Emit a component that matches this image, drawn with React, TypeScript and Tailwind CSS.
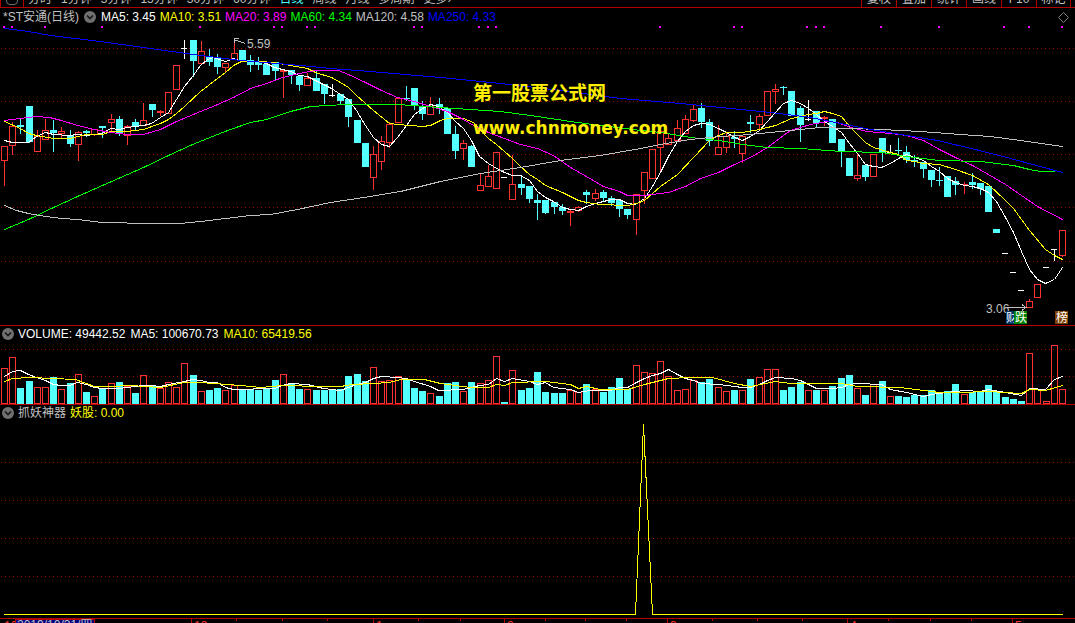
import clsx from 'clsx';

// u = up (hollow red), d = down (solid cyan), f = flat (white)
type Kind = 'u' | 'd' | 'f';
// kind, high, body top, body bottom, low, top of the volume bar, colour of the volume bar
type Candle = [Kind, number, number, number, number, number, Kind];

const candles: Candle[] = [
  ['u', 146, 146, 161, 186, 368, 'u'],
  ['u', 122, 126, 146, 155, 357, 'u'],
  ['d', 119, 125, 127, 134, 388, 'd'],
  ['d', 106, 106, 142, 143, 381, 'd'],
  ['u', 130, 136, 152, 152, 387, 'u'],
  ['u', 119, 130, 140, 140, 387, 'u'],
  ['d', 120, 130, 133, 152, 377, 'd'],
  ['u', 127, 131, 134, 138, 389, 'u'],
  ['d', 130, 135, 144, 147, 383, 'd'],
  ['u', 131, 132, 145, 161, 374, 'u'],
  ['d', 130, 131, 133, 137, 392, 'd'],
  ['u', 129, 129, 135, 136, 396, 'u'],
  ['d', 126, 126, 128, 138, 388, 'd'],
  ['u', 114, 119, 123, 132, 383, 'u'],
  ['d', 116, 119, 133, 136, 382, 'd'],
  ['u', 125, 126, 136, 145, 386, 'u'],
  ['d', 119, 122, 126, 131, 393, 'd'],
  ['u', 103, 120, 126, 126, 375, 'u'],
  ['d', 104, 104, 110, 117, 385, 'd'],
  ['u', 110, 111, 113, 116, 388, 'u'],
  ['u', 92, 92, 114, 114, 382, 'u'],
  ['u', 65, 65, 90, 90, 387, 'u'],
  ['f', 40, 48, 49, 59, 363, 'u'],
  ['d', 40, 40, 61, 77, 375, 'd'],
  ['u', 41, 51, 64, 65, 391, 'u'],
  ['d', 49, 57, 62, 66, 390, 'd'],
  ['d', 54, 58, 67, 74, 388, 'd'],
  ['u', 63, 63, 68, 73, 390, 'u'],
  ['u', 39, 53, 60, 60, 385, 'u'],
  ['d', 50, 50, 60, 60, 389, 'd'],
  ['d', 55, 60, 65, 72, 389, 'd'],
  ['d', 57, 61, 65, 70, 390, 'd'],
  ['d', 64, 64, 75, 75, 388, 'd'],
  ['d', 62, 62, 71, 81, 380, 'd'],
  ['u', 70, 70, 72, 98, 374, 'u'],
  ['d', 70, 70, 75, 84, 384, 'd'],
  ['d', 76, 76, 85, 91, 389, 'd'],
  ['u', 73, 78, 86, 86, 389, 'u'],
  ['d', 71, 78, 91, 91, 390, 'd'],
  ['d', 84, 84, 94, 104, 390, 'd'],
  ['f', 84, 95, 96, 97, 389, 'd'],
  ['d', 94, 94, 101, 105, 389, 'd'],
  ['d', 99, 99, 117, 127, 376, 'd'],
  ['d', 120, 120, 143, 143, 374, 'd'],
  ['d', 143, 143, 167, 167, 381, 'd'],
  ['u', 146, 154, 178, 190, 367, 'u'],
  ['u', 136, 141, 162, 170, 381, 'u'],
  ['u', 122, 124, 143, 148, 380, 'u'],
  ['u', 98, 98, 123, 123, 376, 'u'],
  ['d', 86, 98, 99, 101, 379, 'd'],
  ['d', 88, 88, 106, 110, 388, 'd'],
  ['d', 101, 106, 114, 120, 391, 'd'],
  ['u', 97, 106, 115, 115, 393, 'u'],
  ['d', 98, 104, 107, 114, 396, 'd'],
  ['d', 108, 108, 134, 134, 383, 'd'],
  ['d', 126, 134, 151, 159, 382, 'd'],
  ['u', 140, 143, 149, 160, 391, 'u'],
  ['d', 145, 146, 167, 167, 382, 'd'],
  ['u', 173, 185, 191, 191, 383, 'u'],
  ['u', 165, 176, 187, 187, 380, 'u'],
  ['u', 152, 152, 189, 189, 356, 'u'],
  ['f', 177, 177, 178, 178, 402, 'd'],
  ['u', 155, 184, 200, 200, 370, 'u'],
  ['d', 176, 184, 188, 195, 390, 'd'],
  ['d', 186, 186, 199, 203, 388, 'd'],
  ['d', 194, 200, 203, 220, 372, 'd'],
  ['d', 200, 200, 213, 214, 392, 'd'],
  ['d', 202, 202, 207, 214, 393, 'd'],
  ['d', 204, 207, 211, 215, 393, 'd'],
  ['u', 209, 211, 213, 226, 390, 'u'],
  ['u', 206, 207, 211, 212, 392, 'u'],
  ['d', 190, 192, 195, 204, 384, 'd'],
  ['u', 189, 193, 199, 201, 389, 'u'],
  ['d', 190, 192, 198, 202, 392, 'd'],
  ['d', 196, 198, 203, 206, 387, 'd'],
  ['d', 200, 200, 209, 217, 378, 'd'],
  ['d', 209, 209, 215, 219, 389, 'd'],
  ['u', 194, 194, 220, 235, 365, 'u'],
  ['u', 172, 172, 191, 204, 372, 'u'],
  ['u', 149, 149, 179, 179, 373, 'u'],
  ['u', 127, 131, 148, 172, 361, 'u'],
  ['u', 133, 138, 145, 145, 376, 'u'],
  ['u', 120, 128, 141, 141, 390, 'u'],
  ['u', 115, 119, 134, 134, 389, 'u'],
  ['u', 105, 109, 121, 122, 380, 'u'],
  ['d', 103, 108, 122, 128, 382, 'd'],
  ['d', 119, 122, 141, 146, 379, 'd'],
  ['u', 125, 147, 155, 155, 387, 'u'],
  ['u', 133, 136, 148, 153, 391, 'u'],
  ['d', 131, 137, 139, 148, 390, 'd'],
  ['u', 135, 136, 154, 163, 390, 'u'],
  ['d', 115, 122, 124, 133, 379, 'd'],
  ['u', 114, 116, 125, 130, 377, 'u'],
  ['u', 91, 91, 116, 116, 369, 'u'],
  ['u', 84, 89, 92, 104, 369, 'u'],
  ['d', 86, 87, 88, 95, 390, 'd'],
  ['d', 91, 91, 116, 116, 387, 'd'],
  ['d', 106, 108, 125, 142, 382, 'd'],
  ['f', 100, 119, 120, 121, 390, 'u'],
  ['d', 111, 111, 123, 127, 390, 'd'],
  ['u', 116, 117, 119, 126, 390, 'u'],
  ['d', 119, 119, 143, 143, 386, 'd'],
  ['d', 139, 139, 151, 167, 378, 'd'],
  ['d', 158, 158, 176, 176, 375, 'd'],
  ['u', 154, 175, 179, 181, 388, 'u'],
  ['d', 165, 165, 177, 181, 395, 'd'],
  ['u', 154, 154, 177, 177, 384, 'u'],
  ['d', 138, 138, 153, 162, 381, 'd'],
  ['f', 145, 152, 153, 154, 396, 'u'],
  ['d', 138, 150, 151, 155, 396, 'd'],
  ['d', 146, 152, 160, 163, 397, 'd'],
  ['d', 155, 160, 162, 167, 395, 'd'],
  ['d', 162, 162, 169, 178, 395, 'd'],
  ['d', 170, 170, 180, 187, 390, 'd'],
  ['d', 167, 180, 181, 186, 393, 'd'],
  ['d', 176, 176, 197, 197, 391, 'd'],
  ['d', 177, 181, 185, 195, 384, 'd'],
  ['u', 182, 184, 185, 194, 394, 'u'],
  ['d', 173, 182, 185, 189, 392, 'd'],
  ['d', 183, 183, 189, 195, 392, 'd'],
  ['d', 186, 186, 212, 212, 385, 'd'],
  ['d', 229, 229, 233, 233, 391, 'd'],
  ['f', 253, 253, 254, 254, 397, 'd'],
  ['f', 272, 272, 273, 273, 399, 'd'],
  ['f', 290, 290, 291, 291, 401, 'd'],
  ['u', 299, 301, 308, 308, 353, 'u'],
  ['u', 284, 284, 298, 298, 389, 'u'],
  ['f', 267, 267, 268, 268, 401, 'u'],
  ['f', 249, 249, 250, 261, 345, 'u'],
  ['u', 230, 230, 256, 257, 389, 'u'],
];

const ma5 =
  '4,140 12,142 28,142 36,136 45,132 53,134 69,135 77,134 86,135 102,133 110,128 118,129 127,127 143,125 151,123 160,117 168,112 176,99 184,86 192,76 200,65 207,59 213,57 219,59 225,61 233,58 241,61 258,61 266,63 274,67 290,71 299,75 307,76 315,80 323,84 331,88 340,94 348,99 356,110 365,125 373,137 381,144 389,146 397,137 406,125 414,114 422,108 430,104 438,106 447,112 455,121 463,128 471,140 479,156 488,163 498,169 504,172 512,175 520,175 529,180 537,191 545,197 553,201 562,207 570,209 578,210 586,206 595,203 603,201 611,199 619,199 627,203 635,204 644,198 652,186 660,172 668,156 677,141 685,131 693,125 701,123 709,124 718,128 726,132 734,137 742,140 750,136 759,130 767,121 775,112 783,103 791,100 800,103 808,108 816,114 824,121 832,126 841,132 849,143 857,153 865,164 873,166 881,167 890,163 898,158 906,154 914,157 923,160 931,166 939,171 947,178 955,182 964,185 972,186 980,188 988,192 996,201 1005,217 1013,232 1021,251 1029,269 1037,279 1045,283 1054,279 1062,267';
const ma10 =
  '4,121 20,128 28,133 36,135 53,138 69,138 86,134 102,134 110,131 127,131 143,129 160,123 168,119 176,113 184,106 200,91 217,78 225,72 233,65 241,61 258,61 274,62 290,65 307,68 315,72 331,77 340,82 348,87 356,95 373,110 389,123 397,124 410,125 422,126 430,125 440,120 447,118 463,118 473,122 488,138 496,144 504,151 512,158 520,166 529,174 537,179 545,185 562,192 570,196 578,200 586,202 600,204 627,205 636,203 644,200 652,193 660,186 677,174 693,157 709,140 718,135 726,132 742,132 759,129 775,125 791,118 808,114 816,113 824,111 832,113 841,116 849,126 857,134 865,142 873,147 890,152 898,154 906,160 914,161 923,163 939,164 955,169 972,175 988,184 1005,200 1013,208 1029,230 1045,249 1054,255 1062,259';
const ma20 =
  '4,120 20,118 36,116 49,117 61,120 77,125 94,129 110,132 127,134 143,134 160,129 176,121 200,111 215,105 233,97 250,88 266,83 282,77 299,73 315,70 338,70 348,74 365,82 381,90 397,97 414,101 430,106 447,111 463,119 473,125 488,132 504,138 520,144 537,148 553,155 570,167 586,176 603,186 619,191 627,195 644,195 668,192 685,186 700,178 718,172 734,164 750,157 767,147 783,135 790,130 810,124 827,121 837,122 850,127 867,131 890,133 906,135 923,140 939,149 955,157 972,165 988,174 1005,184 1021,195 1037,206 1062,219';
const ma60 =
  '4,229 28,219 53,207 77,196 102,185 127,174 143,167 168,155 192,144 217,134 230,129 250,122 266,119 290,111 310,106 345,104 397,104 440,107 470,109 500,111 530,115 570,121 600,125 640,130 660,132 690,137 718,140 742,144 767,147 800,148 841,151 881,152 906,156 939,160 980,161 1013,165 1029,169 1040,171 1054,171';
const ma120 =
  '4,205 16,210 28,213 45,216 61,218 77,219 102,222 118,222 135,223 180,223 200,221 225,218 250,215 270,214 297,209 330,202 370,196 400,191 440,181 480,173 520,167 560,160 600,155 640,148 660,144 690,139 720,136 750,134 780,131 800,129 820,127 850,128 880,129 920,131 960,134 990,136 1020,140 1062,146';
const ma250 =
  '4,28 28,31 50,35 100,41 150,48 200,55 240,60 300,65 330,68 370,71 440,77 500,83 560,90 620,98 680,103 720,107 770,112 810,117 840,123 870,129 900,134 937,140 975,149 1010,158 1062,172';

const volMa5 =
  '4,376 12,371 20,370 28,374 36,377 45,380 53,384 61,385 69,385 77,382 86,384 94,387 102,388 118,388 135,386 143,385 151,385 160,386 168,384 184,381 192,379 200,380 209,382 217,382 225,387 233,389 274,388 282,385 290,383 307,384 323,388 340,390 348,387 356,384 365,382 373,378 381,376 397,377 406,378 414,381 430,386 438,390 463,389 479,385 488,384 496,378 504,381 512,378 529,381 537,384 545,382 553,387 570,389 578,392 590,390 610,390 619,387 627,387 636,382 644,378 652,375 660,373 668,369 677,374 685,378 693,380 701,383 718,384 742,387 750,387 759,384 767,380 775,377 791,378 800,380 808,384 816,388 832,388 841,387 849,384 857,383 881,384 890,389 906,392 923,396 931,394 947,392 955,391 964,390 980,391 988,389 1005,392 1021,395 1029,388 1045,389 1054,379 1062,376';
const volMa10 =
  '4,381 12,378 30,377 75,379 94,386 110,386 130,385 160,387 184,382 200,382 240,385 260,387 282,385 320,386 340,386 352,384 373,383 389,382 400,379 424,379 440,383 455,385 470,387 488,387 496,384 504,385 512,382 545,381 570,384 578,388 586,386 600,389 627,389 644,384 668,378 690,377 712,377 734,383 750,386 775,381 790,383 841,383 857,386 900,387 923,390 939,392 960,392 988,391 1021,393 1029,389 1045,390 1062,385';

const eventDots = [
  4, 12, 45, 102, 200, 274, 282, 307, 315, 414, 422, 479, 488, 496, 660, 734, 742, 807, 816, 824, 881, 939, 1004, 1029,
  1062,
];

const axisTicks: { x: number; label?: string }[] = [
  { x: 191, label: '12' },
  { x: 236 },
  { x: 282 },
  { x: 327 },
  { x: 373, label: '1' },
  { x: 418 },
  { x: 460 },
  { x: 504, label: '2' },
  { x: 545 },
  { x: 585 },
  { x: 626 },
  { x: 667, label: '3' },
  { x: 712 },
  { x: 757 },
  { x: 802 },
  { x: 847, label: '4' },
  { x: 888 },
  { x: 930 },
  { x: 971 },
  { x: 1012, label: '5' },
];

const periods = ['分时', '1分钟', '5分钟', '15分钟', '30分钟', '60分钟', '日线', '周线', '月线', '多周期', '更多›'];
const tools = ['复权', '叠加', '统计', '画线', 'F10', '标记'];

const colors: Record<Kind, string> = { u: '#ff3232', d: '#54ffff', f: '#ffffff' };

const centerOf = (i: number) => 4 + Math.round((i * 1058) / 129);

function GridLine({ y }: { y: number }) {
  return <line x1="1" x2="1075" y1={y + 0.5} y2={y + 0.5} stroke="#a00000" strokeDasharray="1 3" />;
}

function Curve({ points, color }: { points: string; color: string }) {
  return <polyline points={points} transform="translate(0.5 0.5)" fill="none" stroke={color} strokeLinecap="square" />;
}

function Bar({ x, top, bottom, kind }: { x: number; top: number; bottom: number; kind: Kind }) {
  const height = bottom - top;
  if (kind === 'u' && height > 2) {
    return <rect x={x - 2.5} y={top + 0.5} width="6" height={height - 1} fill="none" stroke={colors.u} />;
  }
  return <rect x={x - 3} y={top} width={kind === 'f' ? 6 : 7} height={height} fill={colors[kind]} />;
}

function ToggleButton({ label }: { label: string }) {
  return (
    <button type="button" aria-label={label} className="shrink-0">
      <svg viewBox="0 0 12 12" className="block size-3">
        <circle cx="6" cy="6" r="6" fill="#707070" />
        <path d="M3 4.5 L6 7.5 L9 4.5" fill="none" stroke="#181818" strokeWidth="1.6" />
      </svg>
    </button>
  );
}

function Toolbar() {
  return (
    <nav
      aria-label="Chart toolbar"
      className="flex h-2 items-end justify-between overflow-hidden border-b border-[#b00000] text-[#c0c0c0]"
    >
      <div className="flex items-end">
        <div className="flex h-4 w-6 items-end justify-center border-x border-[#b00000] pb-[2px]">
          <span className="h-3 w-3 rounded-sm border border-[#707070]" />
        </div>
        <div className="flex gap-[9px] pl-1">
          {periods.map((period) => (
            <button
              key={period}
              type="button"
              className={clsx('whitespace-nowrap leading-4', period === '日线' && 'text-[#54ffff]')}
            >
              {period}
            </button>
          ))}
        </div>
      </div>
      <div className="flex pr-1">
        {tools.map((tool) => (
          <button
            key={tool}
            type="button"
            className="w-[35px] whitespace-nowrap border-l border-[#b00000] text-center leading-4 last:border-r"
          >
            {tool}
          </button>
        ))}
      </div>
    </nav>
  );
}

function PricePanel() {
  return (
    <section className="relative border-b border-[#b00000]">
      <header className="flex h-[18px] items-center gap-1 whitespace-nowrap pl-[3px] pr-[6px]">
        <div className="flex items-center gap-[5px]">
          <h1 className="text-[#c0c0c0]">*ST安通(日线)</h1>
          <ToggleButton label="主图指标" />
          <span className="text-white">MA5: 3.45</span>
        </div>
        <span className="text-[#ffff00]">MA10: 3.51</span>
        <span className="text-[#ff00ff]">MA20: 3.89</span>
        <span className="text-[#00ff00]">MA60: 4.34</span>
        <span className="text-[#c0c0c0]">MA120: 4.58</span>
        <span className="text-[#0000ff]">MA250: 4.33</span>
        <svg viewBox="0 0 11 11" className="ml-auto size-[11px]">
          <path d="M5.5 0.5 L10.5 5.5 L5.5 10.5 L0.5 5.5 Z" fill="none" stroke="#808080" />
        </svg>
      </header>

      <svg viewBox="0 26 1075 299" className="block w-full" shapeRendering="crispEdges">
        {[48, 101, 154, 207, 261].map((y) => (
          <GridLine key={y} y={y} />
        ))}
        {eventDots.map((x) => (
          <rect key={x} x={x - 1} y="26" width="2" height="2" fill="#ff00ff" />
        ))}
        {candles.map(([kind, high, top, bottom, low], i) => {
          const x = centerOf(i);
          return (
            <g key={i}>
              {high < top && <rect x={x} y={high} width="1" height={top - high} fill={colors[kind]} />}
              {low > bottom && <rect x={x} y={bottom} width="1" height={low - bottom} fill={colors[kind]} />}
              <Bar x={x} top={top} bottom={bottom} kind={kind} />
            </g>
          );
        })}
        <Curve points={ma5} color="#ffffff" />
        <Curve points={ma10} color="#ffff00" />
        <Curve points={ma20} color="#ff00ff" />
        <Curve points={ma60} color="#00ff00" />
        <Curve points={ma120} color="#c0c0c0" />
        <Curve points={ma250} color="#0000ff" />

        {/* highest and lowest price */}
        <path d="M245 43.5 L234 39.5 M239 38.5 H234.5 V43" fill="none" stroke="#c0c0c0" />
        <path d="M1006 307.5 H1027 M1022 304.5 L1026 307.5 L1022 310.5" fill="none" stroke="#c0c0c0" />
        <g fill="#c0c0c0" fontSize="12">
          <text x="247" y="48">
            5.59
          </text>
          <text x="986" y="313">
            3.06
          </text>
        </g>

        {/* event badges */}
        <g fontSize="12" fill="#ffffff">
          <rect x="1006" y="311" width="13" height="13" fill="#003468" />
          <text x="1006" y="322">
            财
          </text>
          <rect x="1014" y="311" width="13" height="13" fill="#008000" />
          <text x="1015" y="322">
            跌
          </text>
          <rect x="1055" y="311" width="13" height="13" fill="#804000" />
          <text x="1056" y="322">
            榜
          </text>
        </g>
      </svg>

      <div className="pointer-events-none absolute left-[44%] top-[69px] whitespace-nowrap font-bold text-[#ffee00]">
        <p className="text-[19px] leading-[34px]">第一股票公式网</p>
        <p className="font-['DejaVu_Sans',sans-serif] text-[17px] leading-[34px]">www.chnmoney.com</p>
      </div>
    </section>
  );
}

function VolumePanel() {
  return (
    <section className="border-b border-[#b00000]">
      <header className="flex h-[17px] items-center gap-[5px] whitespace-nowrap pb-[2px] pl-[2px]">
        <div className="flex items-center gap-1">
          <ToggleButton label="成交量指标" />
          <span className="text-white">VOLUME: 49442.52</span>
        </div>
        <span className="text-white">MA5: 100670.73</span>
        <span className="text-[#ffff00]">MA10: 65419.56</span>
      </header>
      <svg viewBox="0 343 1075 61" className="block w-full" shapeRendering="crispEdges">
        <GridLine y={349} />
        <GridLine y={376} />
        {candles.map((candle, i) => (
          <Bar key={i} x={centerOf(i)} top={candle[5]} bottom={404} kind={candle[6]} />
        ))}
        <Curve points={volMa5} color="#ffffff" />
        <Curve points={volMa10} color="#ffff00" />
      </svg>
    </section>
  );
}

function SignalPanel() {
  return (
    <section className="border-b border-[#b00000]">
      <header className="flex h-4 items-center gap-1 whitespace-nowrap pl-[2px]">
        <ToggleButton label="副图指标" />
        <h2 className="text-[#c0c0c0]">抓妖神器</h2>
        <span className="text-[#ffff00]">妖股: 0.00</span>
      </header>
      <svg viewBox="0 421 1075 197" className="block w-full" shapeRendering="crispEdges">
        {[462, 500, 538, 576].map((y) => (
          <GridLine key={y} y={y} />
        ))}
        <Curve points="4,614 635,614 643,424 652,614 1062,614" color="#ffff00" />
      </svg>
    </section>
  );
}

function TimeAxis() {
  return (
    <footer className="h-1 overflow-hidden">
      <svg viewBox="0 619 1075 4" className="block w-full" shapeRendering="crispEdges">
        {axisTicks.map(({ x, label }) => (
          <g key={x}>
            <rect x={x} y="619" width="1" height={label ? 4 : 2} fill="#b00000" />
            {label && (
              <text x={x + 3} y="630" fontSize="12" fill="#ff3232">
                {label}
              </text>
            )}
          </g>
        ))}
        <text x="4" y="630" fontSize="12" fill="#ff3232">
          10
        </text>
        <rect x="15" y="619" width="79" height="4" fill="#000080" stroke="#b00000" />
        <text x="17" y="629" fontSize="12" fill="#c0c0c0">
          2019/10/31/四
        </text>
      </svg>
    </footer>
  );
}

export default function App() {
  return (
    <main className="min-h-screen overflow-hidden bg-black font-['Liberation_Sans','Noto_Sans_CJK_SC',sans-serif] text-xs">
      <Toolbar />
      <PricePanel />
      <VolumePanel />
      <SignalPanel />
      <TimeAxis />
    </main>
  );
}
